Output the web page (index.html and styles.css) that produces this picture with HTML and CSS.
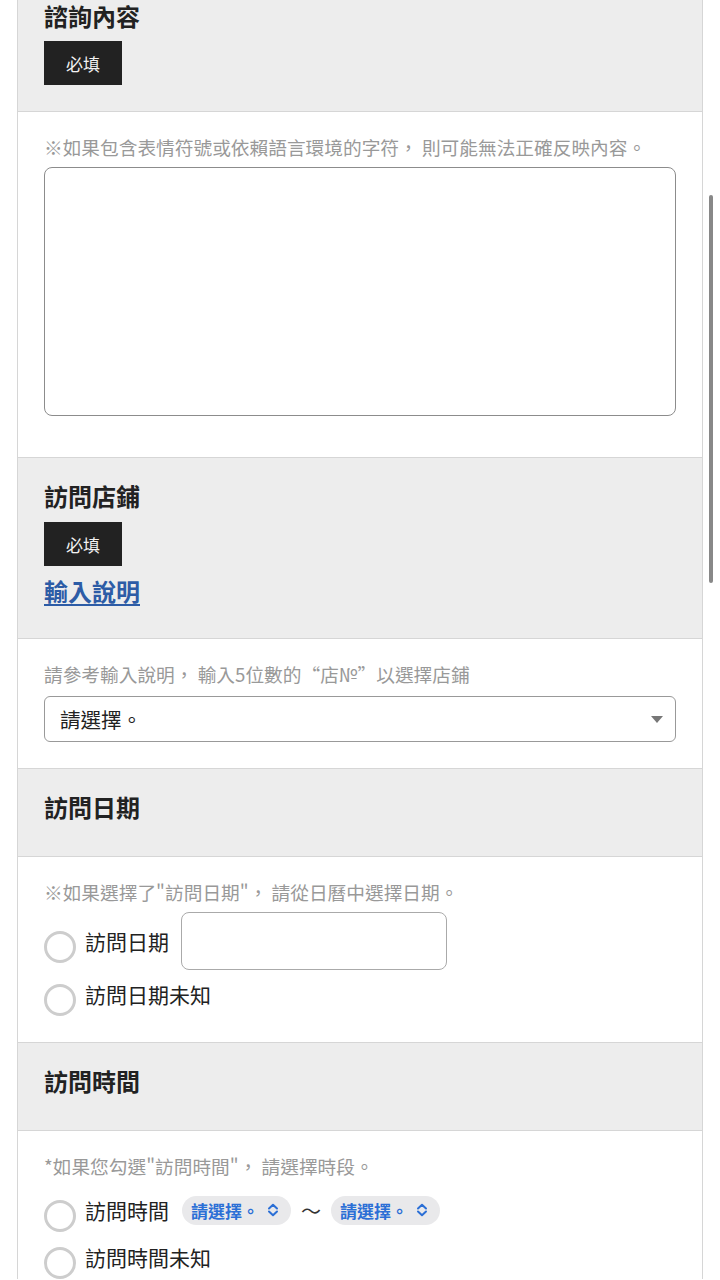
FILE: index.html
```html
<!DOCTYPE html>
<html lang="zh-Hant">
<head>
<meta charset="utf-8">
<title>Form</title>
<link rel="stylesheet" href="styles.css">
</head>
<body>
<div class="form">
  <section class="head head--first">
    <h2 class="title">諮詢內容</h2>
    <span class="badge">必填</span>
  </section>
  <section class="body body--text">
    <p class="note">※如果包含表情符號或依賴語言環境的字符， 則可能無法正確反映內容。</p>
    <div class="textarea"></div>
  </section>

  <section class="head head--link">
    <h2 class="title">訪問店鋪</h2>
    <span class="badge">必填</span>
    <a class="link" href="#">輸入說明</a>
  </section>
  <section class="body body--select">
    <p class="note">請參考輸入說明， 輸入5位數的“店№”以選擇店鋪</p>
    <div class="select">
      <span>請選擇。</span>
      <svg class="caret" width="14" height="9" viewBox="0 0 14 9"><path d="M1 1h12L7 8z" fill="#777"/></svg>
    </div>
  </section>

  <section class="head">
    <h2 class="title">訪問日期</h2>
  </section>
  <section class="body body--radio">
    <p class="note">※如果選擇了"訪問日期"， 請從日曆中選擇日期。</p>
    <div class="row">
      <span class="radio"></span>
      <span class="label">訪問日期</span>
      <div class="dateinput"></div>
    </div>
    <div class="row row--next">
      <span class="radio"></span>
      <span class="label">訪問日期未知</span>
    </div>
  </section>

  <section class="head">
    <h2 class="title">訪問時間</h2>
  </section>
  <section class="body body--time">
    <p class="note">*如果您勾選"訪問時間"， 請選擇時段。</p>
    <div class="row row--time">
      <span class="radio"></span>
      <span class="label">訪問時間</span>
      <span class="pill">請選擇。<svg class="chev" width="12" height="14" viewBox="0 0 12 14"><path d="M2 5.5L6 1.8l4 3.7M2 8.5l4 3.7 4-3.7" fill="none" stroke="#2b6fd6" stroke-width="2" stroke-linecap="round" stroke-linejoin="round"/></svg></span>
      <span class="tilde">〜</span>
      <span class="pill">請選擇。<svg class="chev" width="12" height="14" viewBox="0 0 12 14"><path d="M2 5.5L6 1.8l4 3.7M2 8.5l4 3.7 4-3.7" fill="none" stroke="#2b6fd6" stroke-width="2" stroke-linecap="round" stroke-linejoin="round"/></svg></span>
    </div>
    <div class="row row--time2">
      <span class="radio"></span>
      <span class="label">訪問時間未知</span>
    </div>
  </section>
</div>
<div class="scrollbar"></div>
</body>
</html>
```

FILE: styles.css
```css
html, body {
  margin: 0;
  padding: 0;
  background: #fff;
  overflow: hidden;
}
body {
  font-family: "Noto Sans CJK TC", "Noto Sans", sans-serif;
  color: #222;
  height: 1280px;
}
.form {
  margin: 0 17px;
  border-left: 1px solid #d6d6d6;
  border-right: 1px solid #d6d6d6;
}
.head {
  background: #ededed;
  border-bottom: 1px solid #d6d6d6;
  padding: 21px 26px 32px;
}
.head--first { padding-top: 1px; padding-bottom: 26px; }
.head--first .title { line-height: 30px; }
.head--first .badge { margin-top: 10px; }
.head--link { padding-bottom: 30px; }
.title {
  margin: 0;
  font-size: 24px;
  line-height: 34px;
  font-weight: 700;
  color: #222;
}
.badge {
  display: flex;
  align-items: center;
  justify-content: center;
  width: 78px;
  height: 44px;
  margin-top: 9px;
  background: #222;
  color: #f2f2f2;
  font-size: 17px;
}
.link {
  display: inline-block;
  margin-top: 8px;
  font-size: 24px;
  line-height: 34px;
  font-weight: 700;
  color: #2d5ca6;
  text-decoration: underline;
  text-decoration-thickness: 2px;
  text-underline-offset: 3px;
}
.body {
  background: #fff;
  border-bottom: 1px solid #d6d6d6;
  padding: 21px 26px 24px;
}
.note {
  margin: 0;
  font-size: 18.7px;
  line-height: 28px;
  color: #999;
  white-space: nowrap;
}
.body--text { padding-bottom: 41px; }
.textarea {
  margin-top: 6px;
  height: 247px;
  border: 1.5px solid #8c8c8c;
  border-radius: 8px;
}
.body--select { padding-top: 21px; padding-bottom: 26px; }
.select {
  box-sizing: border-box;
  margin-top: 8px;
  height: 46px;
  border: 1.5px solid #999;
  border-radius: 6px;
  display: flex;
  align-items: center;
  justify-content: space-between;
  padding: 0 11px 0 15px;
  font-size: 20.5px;
  color: #222;
}
.caret { display: block; }
.row {
  display: flex;
  align-items: center;
  margin-top: 6px;
}
.row--next { margin-top: 2px; }
.radio {
  width: 26px;
  height: 26px;
  border: 3px solid #cdcdcd;
  border-radius: 50%;
  margin-top: 12px;
  flex: none;
}
.label {
  margin-left: 9px;
  font-size: 21px;
  line-height: 32px;
  color: #222;
}
.dateinput {
  margin-left: 12px;
  width: 264px;
  height: 56px;
  border: 1px solid #aaa;
  border-radius: 8px;
}
.body--radio { padding-bottom: 26px; }
.body--time { padding-bottom: 0; border-bottom: none; }
.row--time { margin-top: 8px; height: 44px; }
.row--time2 { margin-top: 3px; }
.pill {
  display: inline-flex;
  align-items: center;
  margin-left: 13px;
  height: 29px;
  padding: 0 12px 0 9px;
  border-radius: 15px;
  background: #e9e9eb;
  color: #2b6fd6;
  font-size: 17px;
  font-weight: 700;
}
.chev { margin-left: 8px; display: block; }
.tilde {
  margin-left: 10px;
  font-size: 20px;
  color: #333;
}
.tilde + .pill { margin-left: 10px; }
.scrollbar {
  position: fixed;
  left: 709px;
  top: 195px;
  width: 4px;
  height: 388px;
  border-radius: 2px;
  background: #888;
}
```
